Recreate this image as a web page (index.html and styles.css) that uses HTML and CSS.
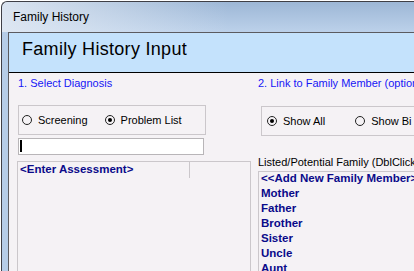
FILE: index.html
```html
<!DOCTYPE html>
<html lang="en">
<head>
    <meta charset="UTF-8">
    <meta name="viewport" content="width=device-width, initial-scale=1.0">
    <title>Family History</title>
    <link rel="stylesheet" href="styles.css">
</head>
<body>
    <div class="window">
        <div class="titlebar">Family History</div>
        <div class="frame">
            <div class="client">
                <div class="header">
                    <h1>Family History Input</h1>
                </div>

                <div class="content">
                    <div class="col col-left">
                        <div class="step">1. Select Diagnosis</div>
                        <div class="groupbox">
                            <label class="radio"><span class="dot"></span>Screening</label>
                            <label class="radio"><span class="dot checked"></span>Problem List</label>
                        </div>
                        <div class="textbox"><span class="caret"></span></div>
                        <div class="listbox listbox-grid">
                            <div class="grid-head">
                                <div class="grid-cell">&lt;Enter Assessment&gt;</div>
                                <div class="grid-cell grid-cell-rest"></div>
                            </div>
                        </div>
                    </div>

                    <div class="col col-right">
                        <div class="step">2. Link to Family Member (optiona</div>
                        <div class="groupbox groupbox-right">
                            <label class="radio"><span class="dot checked"></span>Show All</label>
                            <label class="radio radio-wide"><span class="dot"></span>Show Bi</label>
                        </div>
                        <div class="list-label">Listed/Potential Family (DblClick t</div>
                        <div class="listbox listbox-family">
                            <ul>
                                <li>&lt;&lt;Add New Family Member&gt;</li>
                                <li>Mother</li>
                                <li>Father</li>
                                <li>Brother</li>
                                <li>Sister</li>
                                <li>Uncle</li>
                                <li>Aunt</li>
                            </ul>
                        </div>
                    </div>
                </div>
            </div>
        </div>
    </div>
</body>
</html>
```

FILE: styles.css
```css
html, body {
    margin: 0;
    padding: 0;
    height: 271px;
    overflow: hidden;
    background-color: #ffffff;
}
body {
    padding: 1px 0 0 1px;
    box-sizing: border-box;
    font-family: "Liberation Sans", Arial, sans-serif;
}
.window {
    height: 270px;
    box-sizing: border-box;
    border-top: 1px solid #3f3f46;
    border-left: 1px solid #3f3f46;
    border-top-left-radius: 6px;
    background: linear-gradient(to right, rgba(228, 235, 244, 0.85), rgba(228, 235, 244, 0) 55%),
                linear-gradient(to bottom, #9db7d6, #bcd1ea 30px, #b6cde8);
    overflow: hidden;
}
.titlebar {
    height: 30px;
    padding-left: 11px;
    font-size: 12px;
    line-height: 30px;
    color: #000;
    white-space: nowrap;
}
.frame {
    padding-left: 6px;
    background-color: #b6cde8;
}
.client {
    border-top: 1px solid #5b5b60;
    border-left: 1px solid #5b5b60;
    background-color: #f5f2f5;
    height: 238px;
    overflow: hidden;
}
.header {
    height: 39px;
    background-color: #c4e2fc;
    border-bottom: 1px solid #000;
}
.header h1 {
    margin: 0;
    padding: 5px 0 0 13px;
    font-size: 18px;
    line-height: 22px;
    font-weight: normal;
    letter-spacing: 0.3px;
    color: #000;
}
.content {
    display: flex;
    gap: 8px;
    padding: 4px 0 0 9px;
    white-space: nowrap;
}
.col {
    display: flex;
    flex-direction: column;
    align-items: flex-start;
    flex: none;
}
.col-left {
    width: 232px;
}
.col-right {
    width: 156px;
}
.step {
    font-size: 11px;
    line-height: 13px;
    color: #1616f5;
}
.groupbox {
    display: flex;
    align-items: center;
    height: 30px;
    width: 188px;
    margin-top: 15px;
    padding-left: 3px;
    border: 1px solid #cbc7cb;
    box-sizing: border-box;
}
.groupbox-right {
    width: 155px;
    margin-top: 16px;
    margin-left: 3px;
    padding-left: 5px;
    border-right: none;
}
.radio {
    display: flex;
    align-items: center;
    gap: 6px;
    font-size: 11px;
    line-height: 13px;
    color: #000;
    margin-right: 17px;
}
.radio-wide {
    margin-left: 13px;
    margin-right: 0;
}
.dot {
    display: flex;
    align-items: center;
    justify-content: center;
    width: 10px;
    height: 10px;
    border: 1px solid #222;
    border-radius: 50%;
    box-sizing: border-box;
}
.dot.checked::after {
    content: "";
    width: 4px;
    height: 4px;
    border-radius: 50%;
    background-color: #000;
}
.textbox {
    width: 186px;
    height: 17px;
    margin-top: 3px;
    border: 1px solid #b8b5b8;
    background-color: #fff;
    box-sizing: border-box;
}
.caret {
    display: block;
    width: 2px;
    height: 12px;
    margin: 1px 0 0 1px;
    background-color: #000;
}
.listbox {
    border: 1px solid #cbc7cb;
    border-bottom: none;
    background-color: #f5f2f5;
    box-sizing: border-box;
    overflow: hidden;
}
.listbox-grid {
    width: 234px;
    height: 110px;
    margin-top: 6px;
    margin-left: -1px;
}
.grid-head {
    display: flex;
}
.grid-cell {
    width: 172px;
    height: 16px;
    padding-left: 2px;
    border-right: 1px solid #cbc7cb;
    box-sizing: border-box;
    font-size: 11.5px;
    font-weight: bold;
    line-height: 14px;
    color: #0a0a8a;
}
.grid-cell-rest {
    width: 60px;
    border-right: none;
}
.list-label {
    margin-top: 20px;
    font-size: 11px;
    line-height: 13px;
    color: #000;
}
.listbox-family {
    width: 156px;
    height: 100px;
    margin-top: 2px;
    border-right: none;
}
ul {
    list-style: none;
    margin: 0;
    padding: 0;
}
ul li {
    padding: 0 0 2px 2px;
    font-size: 11.5px;
    font-weight: bold;
    line-height: 13px;
    color: #0a0a8a;
}
```
